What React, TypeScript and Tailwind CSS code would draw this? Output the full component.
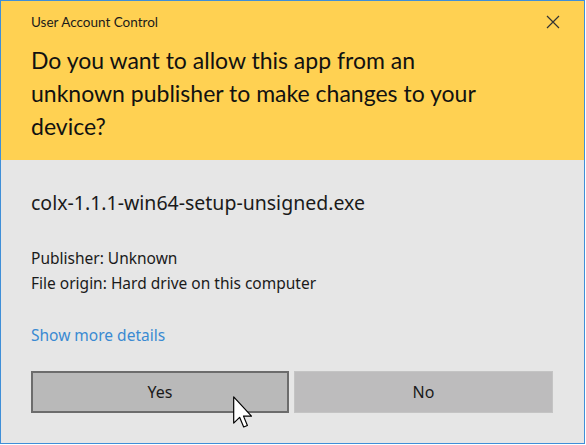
export default function App() {
  return (
    <div className="relative w-[586px] h-[445px] bg-white" style={{ fontFamily: '"Noto Sans", "Open Sans", sans-serif' }}>
      <div className="w-[585px] h-[444px] border border-[#3f8fd8] flex flex-col">
        <div className="bg-[#ffd152] h-[159px] px-[30px] pt-[9px] relative">
          <div className="flex flex-row justify-between items-center h-[24px]">
            <p className="text-[13.5px] text-[#1a1a1a] font-['Lato',sans-serif]">User Account Control</p>
            <svg width="14" height="14" viewBox="0 0 14 14" className="mr-[-6px]">
              <path d="M1 1 L13 13 M13 1 L1 13" stroke="#333" strokeWidth="1.2" />
            </svg>
          </div>
          <p className="mt-[10px] w-[462px] text-[23px] leading-[33px] text-[#111] font-['Lato',sans-serif]">
            Do you want to allow this app from an unknown publisher to make changes to your device?
          </p>
        </div>
        <div className="flex-1 bg-[#e6e6e6] px-[30px] flex flex-col">
          <p className="mt-[29px] text-[19.5px] leading-[28px] text-[#1a1a1a]">colx-1.1.1-win64-setup-unsigned.exe</p>
          <div className="mt-[29px] text-[15.5px] leading-[25px] text-[#1a1a1a]">
            <p>Publisher: Unknown</p>
            <p>File origin: Hard drive on this computer</p>
          </div>
          <p className="mt-[27px] text-[15.5px] leading-[25px] text-[#3a8ad2]">Show more details</p>
          <div className="mt-[23px] flex flex-row gap-[5px]">
            <button className="w-[258px] h-[42px] bg-[#b9b9b9] border-2 border-[#6c6c6c] text-[16px] text-[#1a1a1a]">Yes</button>
            <button className="w-[259px] h-[42px] bg-[#bdbcbd] border border-[#c4c4c4] text-[16px] text-[#1a1a1a]">No</button>
          </div>
        </div>
      </div>
      <svg className="absolute left-[231px] top-[396px]" width="24" height="33" viewBox="0 0 12 19.5">
        <path d="M0.5 0.5 L0.5 16 L4 12.6 L6.4 18.3 L8.6 17.4 L6.3 11.9 L11 11.9 Z" fill="#fff" stroke="#000" strokeWidth="0.7" strokeLinejoin="round" />
      </svg>
    </div>
  );
}
